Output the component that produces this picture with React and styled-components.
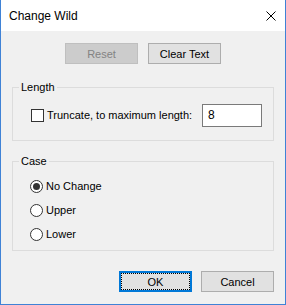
import React from 'react';
import styled, { createGlobalStyle } from 'styled-components';

const GlobalStyle = createGlobalStyle`
  html, body { margin: 0; padding: 0; background: #ffffff; }
  body { font-family: "Liberation Sans", Arial, sans-serif; font-size: 11px; color: #000; }
`;

const Window = styled.div`
  width: 286px;
  height: 305px;
  box-sizing: border-box;
  border: 1px solid #3f82d6;
  border-top: none;
  display: flex;
  flex-direction: column;
  background: #f0f0f0;
`;

const TitleBar = styled.div`
  height: 31px;
  flex: none;
  background: #ffffff;
  display: flex;
  align-items: center;
  justify-content: space-between;
  padding: 0 9px 0 8px;
`;

const Title = styled.span`
  font-size: 12px;
  line-height: 15px;
  padding-top: 1px;
`;

const CloseIcon = () => (
  <svg width="10" height="10" viewBox="0 0 10 10">
    <path d="M0.5 0.5 L9.5 9.5 M9.5 0.5 L0.5 9.5" stroke="#000" strokeWidth="1" />
  </svg>
);

const Body = styled.div`
  flex: 1;
  padding: 12px 11px 12px 11px;
  display: flex;
  flex-direction: column;
`;

const ButtonRow = styled.div`
  display: flex;
  justify-content: ${(p) => p.$align || 'center'};
  gap: ${(p) => p.$gap || 10}px;
`;

const Button = styled.button`
  position: relative;
  width: 73px;
  height: 21px;
  box-sizing: border-box;
  padding: 0;
  font-family: inherit;
  font-size: 11px;
  color: ${(p) => (p.disabled ? '#838383' : '#000')};
  background: ${(p) => (p.disabled ? '#cccccc' : '#e1e1e1')};
  border: ${(p) => (p.$default ? '2px solid #0078d7' : p.disabled ? '1px solid #bfbfbf' : '1px solid #adadad')};
  ${(p) =>
    p.$default &&
    `&::after {
      content: '';
      position: absolute;
      inset: 0;
      border: 1px dotted #000;
    }`}
`;

const Group = styled.fieldset`
  margin: ${(p) => p.$top || 0}px 0 0 0;
  padding: 0;
  border: 1px solid #dcdcdc;
  min-width: 0;
`;

const Legend = styled.legend`
  margin-left: 6px;
  padding: 0 2px;
  font-size: 11px;
  line-height: 15px;
`;

const GroupInner = styled.div`
  padding: ${(p) => p.$pad};
  display: flex;
  flex-direction: column;
  gap: ${(p) => p.$gap || 0}px;
`;

const OptionRow = styled.label`
  display: flex;
  align-items: center;
  height: ${(p) => p.$height || 13}px;
  gap: 3px;
  line-height: 13px;
  white-space: nowrap;
`;

const CheckBox = styled.span`
  width: 13px;
  height: 13px;
  box-sizing: border-box;
  border: 1px solid #333333;
  background: #ffffff;
  flex: none;
`;

const Radio = styled.span`
  width: 13px;
  height: 13px;
  box-sizing: border-box;
  border: 1px solid #333333;
  border-radius: 50%;
  background: #ffffff;
  flex: none;
  display: flex;
  align-items: center;
  justify-content: center;
  &::after {
    content: '';
    width: 7px;
    height: 7px;
    border-radius: 50%;
    background: ${(p) => (p.$checked ? '#333333' : 'transparent')};
  }
`;

const TextInput = styled.div`
  margin-left: auto;
  flex: none;
  width: 60px;
  height: 23px;
  box-sizing: border-box;
  border: 1px solid #7a7a7a;
  background: #ffffff;
  padding: 0 5px;
  display: flex;
  align-items: center;
  font-size: 12px;
`;

const Spacer = styled.div`
  flex: 1;
`;

export default function App() {
  return (
    <>
      <GlobalStyle />
      <Window>
        <TitleBar>
          <Title>Change Wild</Title>
          <CloseIcon />
        </TitleBar>
        <Body>
          <ButtonRow $gap={10}>
            <Button disabled>Reset</Button>
            <Button>Clear Text</Button>
          </ButtonRow>

          <Group $top={16}>
            <Legend>Length</Legend>
            <GroupInner $pad="9px 11px 13px 18px">
              <OptionRow $height={23}>
                <CheckBox />
                <span>Truncate, to maximum length:</span>
                <TextInput>8</TextInput>
              </OptionRow>
            </GroupInner>
          </Group>

          <Group $top={13}>
            <Legend>Case</Legend>
            <GroupInner $pad="11px 11px 9px 17px" $gap={11}>
              <OptionRow>
                <Radio $checked />
                <span>No Change</span>
              </OptionRow>
              <OptionRow>
                <Radio />
                <span>Upper</span>
              </OptionRow>
              <OptionRow>
                <Radio />
                <span>Lower</span>
              </OptionRow>
            </GroupInner>
          </Group>

          <Spacer />
          <ButtonRow $align="flex-end" $gap={9}>
            <Button $default>OK</Button>
            <Button>Cancel</Button>
          </ButtonRow>
        </Body>
      </Window>
    </>
  );
}
